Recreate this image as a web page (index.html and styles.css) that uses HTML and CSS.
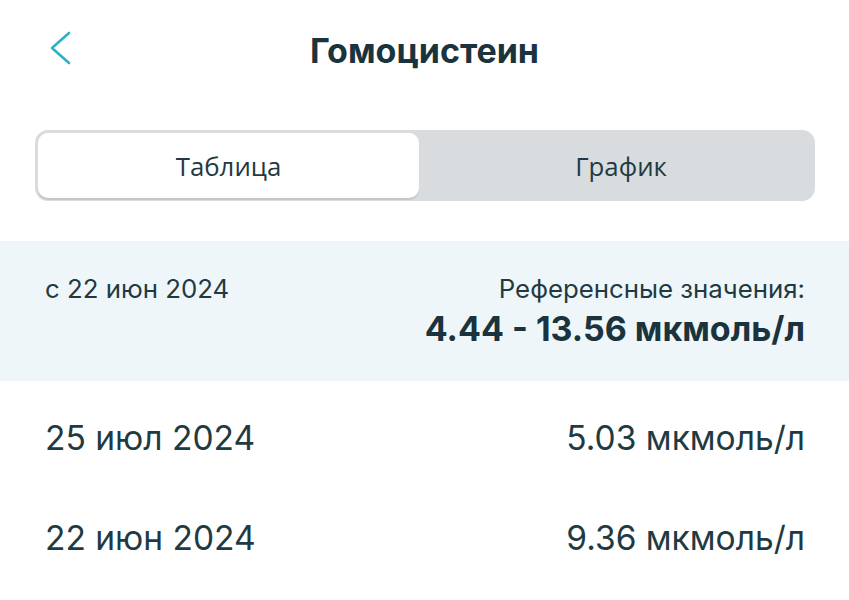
FILE: index.html
```html
<!DOCTYPE html>
<html>
<head>
    <link rel="stylesheet" href="styles.css">
</head>
<body>
    <div class="header">
        <button class="back-btn">
            <svg width="24" height="36" viewBox="0 0 24 36">
                <path d="M19,3 L2,18 L19,33" fill="none" stroke="#2ab3c6" stroke-width="2.6" stroke-linecap="round" stroke-linejoin="round" />
            </svg>
        </button>
        <h1 class="title">Гомоцистеин</h1>
    </div>

    <div class="segment">
        <div class="segment-item active">Таблица</div>
        <div class="segment-item">График</div>
    </div>

    <div class="info">
        <div class="info-since">с 22 июн 2024</div>
        <div class="info-ref">
            <div class="ref-label">Референсные значения:</div>
            <div class="ref-value">4.44 - 13.56 мкмоль/л</div>
        </div>
    </div>

    <div class="rows">
        <div class="row">
            <span>25 июл 2024</span>
            <span>5.03 мкмоль/л</span>
        </div>
        <div class="row">
            <span>22 июн 2024</span>
            <span>9.36 мкмоль/л</span>
        </div>
    </div>
</body>
</html>
```

FILE: styles.css
```css
body {
    margin: 0;
    background: white;
    font-family: Inter, "Noto Sans", sans-serif;
    color: #1f3a42;
}

.header {
    position: relative;
    height: 100px;
    display: flex;
    align-items: center;
    justify-content: center;
}

.back-btn {
    position: absolute;
    left: 50px;
    top: 30px;
    padding: 0;
    border: none;
    background: none;
}

.title {
    margin: 0;
    font-size: 34px;
    font-weight: 700;
    color: #1a333c;
}

.segment {
    margin: 30px 34px 0 35px;
    height: 71px;
    padding: 3px;
    box-sizing: border-box;
    display: flex;
    background: #d9dcdf;
    border-radius: 13px;
}

.segment-item {
    flex: 1;
    display: flex;
    align-items: center;
    justify-content: center;
    font-family: "Open Sans", sans-serif;
    font-size: 25.8px;
    color: #1f3a42;
    border-radius: 10px;
}

.segment-item + .segment-item {
    padding-left: 11px;
}

.segment-item.active {
    flex: 0 0 381px;
    background: white;
    box-shadow: 0 2px 0 #c4c6c8;
}

.info {
    margin-top: 40px;
    height: 140px;
    box-sizing: border-box;
    padding: 32px 44px 0 45px;
    display: flex;
    justify-content: space-between;
    background: #eef6f9;
}

.info-since {
    font-size: 25.8px;
}

.info-ref {
    text-align: right;
}

.ref-label {
    font-size: 25.8px;
}

.ref-value {
    margin-top: 4px;
    font-size: 34px;
    font-weight: 700;
    color: #1a333c;
}

.rows {
    padding: 7px 44px 0 45px;
}

.row {
    height: 100px;
    display: flex;
    justify-content: space-between;
    align-items: center;
    font-size: 33.5px;
}
```
